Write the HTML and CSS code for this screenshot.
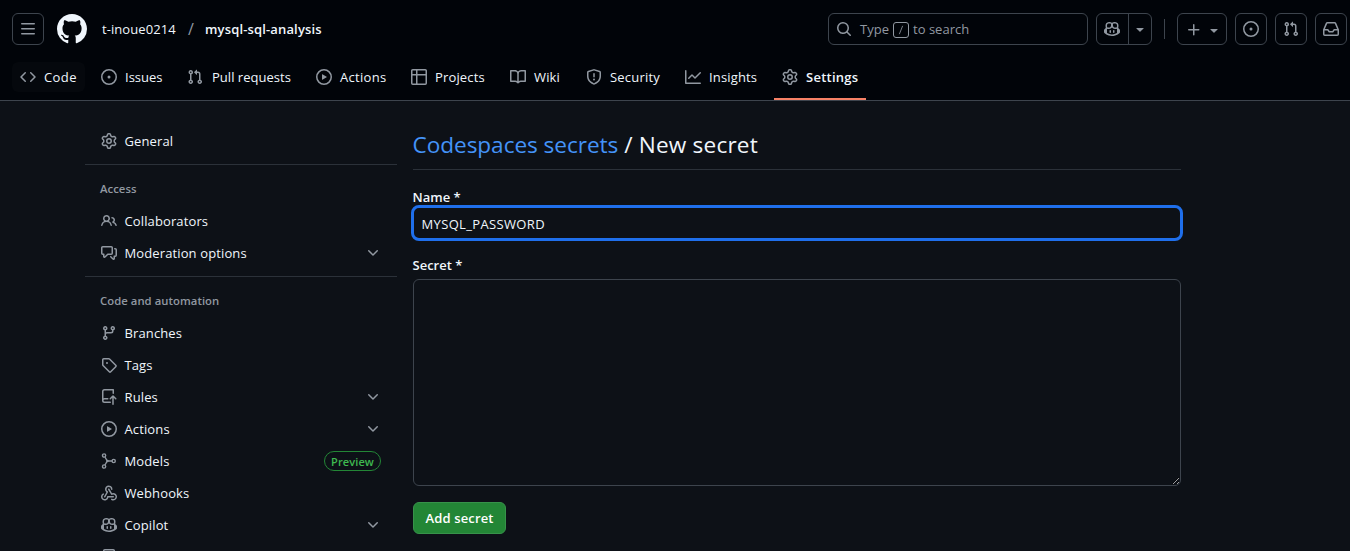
FILE: index.html
```html
<!DOCTYPE html>
<html lang="en">
<head>
<meta charset="utf-8">
<title>New secret</title>
<link rel="stylesheet" href="styles.css">
</head>
<body>
<svg class="sprite" aria-hidden="true">
  <symbol id="gear" viewBox="0 0 16 16"><path d="M8 0a8.2 8.2 0 0 1 .701.031C9.444.095 9.99.645 10.16 1.29l.288 1.107c.018.066.079.158.212.224.231.114.454.243.668.386.123.082.233.09.299.071l1.103-.303c.644-.176 1.392.021 1.82.63.27.385.506.792.704 1.218.315.675.111 1.422-.364 1.891l-.814.806c-.049.048-.098.147-.088.294.016.257.016.515 0 .772-.01.147.038.246.088.294l.814.806c.475.469.679 1.216.364 1.891a7.977 7.977 0 0 1-.704 1.217c-.428.61-1.176.807-1.82.63l-1.102-.302c-.067-.019-.177-.011-.3.071a5.909 5.909 0 0 1-.668.386c-.133.066-.194.158-.211.224l-.29 1.106c-.168.646-.715 1.196-1.458 1.26a8.006 8.006 0 0 1-1.402 0c-.743-.064-1.289-.614-1.458-1.26l-.289-1.106c-.018-.066-.079-.158-.212-.224a5.738 5.738 0 0 1-.668-.386c-.123-.082-.233-.09-.299-.071l-1.103.303c-.644.176-1.392-.021-1.82-.63a8.12 8.12 0 0 1-.704-1.218c-.315-.675-.111-1.422.363-1.891l.815-.806c.05-.048.098-.147.088-.294a6.214 6.214 0 0 1 0-.772c.01-.147-.038-.246-.088-.294l-.815-.806C.635 6.045.431 5.298.746 4.623a7.92 7.92 0 0 1 .704-1.217c.428-.61 1.176-.807 1.82-.63l1.102.302c.067.019.177.011.3-.071.214-.143.437-.272.668-.386.133-.066.194-.158.211-.224l.29-1.106C6.009.645 6.556.095 7.299.03 7.53.01 7.764 0 8 0Zm-.571 1.525c-.036.003-.108.036-.137.146l-.289 1.105c-.147.561-.549.967-.998 1.189-.173.086-.34.183-.5.29-.417.278-.97.423-1.529.27l-1.103-.303c-.109-.03-.175.016-.195.045-.22.312-.412.644-.573.99-.014.031-.021.11.059.19l.815.806c.411.406.562.957.53 1.456a4.709 4.709 0 0 0 0 .582c.032.499-.119 1.05-.53 1.456l-.815.806c-.081.08-.073.159-.059.19.162.346.353.677.573.989.02.03.085.076.195.046l1.102-.303c.56-.153 1.113-.008 1.53.27.161.107.328.204.501.29.447.222.85.629.997 1.189l.289 1.105c.029.109.101.143.137.146a6.6 6.6 0 0 0 1.142 0c.036-.003.108-.036.137-.146l.289-1.105c.147-.561.549-.967.998-1.189.173-.086.34-.183.5-.29.417-.278.97-.423 1.529-.27l1.103.303c.109.029.175-.016.195-.045.22-.313.411-.644.573-.99.014-.031.021-.11-.059-.19l-.815-.806c-.411-.406-.562-.957-.53-1.456a4.709 4.709 0 0 0 0-.582c-.032-.499.119-1.05.53-1.456l.815-.806c.081-.08.073-.159.059-.19a6.464 6.464 0 0 0-.573-.989c-.02-.03-.085-.076-.195-.046l-1.102.303c-.56.153-1.113.008-1.53-.27a4.44 4.44 0 0 0-.501-.29c-.447-.222-.85-.629-.997-1.189l-.289-1.105c-.029-.11-.101-.143-.137-.146a6.6 6.6 0 0 0-1.142 0ZM11 8a3 3 0 1 1-6 0 3 3 0 0 1 6 0ZM9.5 8a1.5 1.5 0 1 0-3.001.001A1.5 1.5 0 0 0 9.5 8Z"/></symbol>
  <symbol id="menu" viewBox="0 0 16 16"><path d="M1 2.75A.75.75 0 0 1 1.75 2h12.5a.75.75 0 0 1 0 1.5H1.75A.75.75 0 0 1 1 2.75Zm0 5A.75.75 0 0 1 1.75 7h12.5a.75.75 0 0 1 0 1.5H1.75A.75.75 0 0 1 1 7.75ZM1.75 12h12.5a.75.75 0 0 1 0 1.5H1.75a.75.75 0 0 1 0-1.5Z"/></symbol>
  <symbol id="mark" viewBox="0 0 16 16"><path d="M8 0c4.42 0 8 3.58 8 8a8.013 8.013 0 0 1-5.45 7.59c-.4.08-.55-.17-.55-.38 0-.27.01-1.13.01-2.2 0-.75-.25-1.23-.54-1.48 1.78-.2 3.65-.88 3.65-3.95 0-.88-.31-1.59-.82-2.15.08-.2.36-1.02-.08-2.12 0 0-.67-.22-2.2.82-.64-.18-1.32-.27-2-.27-.68 0-1.36.09-2 .27-1.53-1.03-2.2-.82-2.2-.82-.44 1.1-.16 1.92-.08 2.12-.51.56-.82 1.28-.82 2.15 0 3.06 1.86 3.75 3.64 3.95-.23.2-.44.55-.51 1.07-.46.21-1.61.55-2.33-.66-.15-.24-.6-.83-1.23-.82-.67.01-.27.38.01.53.34.19.73.9.82 1.13.16.45.68 1.31 2.69.94 0 .67.01 1.3.01 1.49 0 .21-.15.45-.55.38A7.995 7.995 0 0 1 0 8c0-4.42 3.58-8 8-8Z"/></symbol>
  <symbol id="code" viewBox="0 0 16 16"><path d="m11.28 3.22 4.25 4.25a.75.75 0 0 1 0 1.06l-4.25 4.25a.749.749 0 0 1-1.275-.326.749.749 0 0 1 .215-.734L13.94 8l-3.72-3.72a.749.749 0 0 1 .326-1.275.749.749 0 0 1 .734.215Zm-6.56 0a.751.751 0 0 1 1.042.018.751.751 0 0 1 .018 1.042L2.06 8l3.72 3.72a.749.749 0 0 1-.326 1.275.749.749 0 0 1-.734-.215L.47 8.53a.75.75 0 0 1 0-1.06Z"/></symbol>
  <symbol id="issue" viewBox="0 0 16 16"><path d="M8 9.5a1.5 1.5 0 1 0 0-3 1.5 1.5 0 0 0 0 3ZM8 0a8 8 0 1 1 0 16A8 8 0 0 1 8 0ZM1.5 8a6.5 6.5 0 1 0 13 0 6.5 6.5 0 0 0-13 0Z"/></symbol>
  <symbol id="pull" viewBox="0 0 16 16"><path d="M1.5 3.25a2.25 2.25 0 1 1 3 2.122v5.256a2.251 2.251 0 1 1-1.5 0V5.372A2.25 2.25 0 0 1 1.5 3.25Zm5.677-.177L9.573.677A.25.25 0 0 1 10 .854V2.5h1A2.5 2.5 0 0 1 13.5 5v5.628a2.251 2.251 0 1 1-1.5 0V5a1 1 0 0 0-1-1h-1v1.646a.25.25 0 0 1-.427.177L7.177 3.427a.25.25 0 0 1 0-.354ZM3.75 2.5a.75.75 0 1 0 0 1.5.75.75 0 0 0 0-1.5Zm0 9.5a.75.75 0 1 0 0 1.5.75.75 0 0 0 0-1.5Zm8.25.75a.75.75 0 1 0 1.5 0 .75.75 0 0 0-1.5 0Z"/></symbol>
  <symbol id="play" viewBox="0 0 16 16"><path d="M8 0a8 8 0 1 1 0 16A8 8 0 0 1 8 0ZM1.5 8a6.5 6.5 0 1 0 13 0 6.5 6.5 0 0 0-13 0Zm4.879-2.773 4.264 2.559a.25.25 0 0 1 0 .428l-4.264 2.559A.25.25 0 0 1 6 10.559V5.442a.25.25 0 0 1 .379-.215Z"/></symbol>
  <symbol id="table" viewBox="0 0 16 16"><path d="M0 1.75C0 .784.784 0 1.75 0h12.5C15.216 0 16 .784 16 1.75v12.5A1.75 1.75 0 0 1 14.25 16H1.75A1.75 1.75 0 0 1 0 14.25ZM6.5 6.5v8h7.75a.25.25 0 0 0 .25-.25V6.5Zm8-1.5V1.75a.25.25 0 0 0-.25-.25H6.5V5Zm-13 1.5v7.75c0 .138.112.25.25.25H5v-8ZM5 5V1.5H1.75a.25.25 0 0 0-.25.25V5Z"/></symbol>
  <symbol id="book" viewBox="0 0 16 16"><path d="M0 1.75A.75.75 0 0 1 .75 1h4.253c1.227 0 2.317.59 3 1.501A3.743 3.743 0 0 1 11.006 1h4.245a.75.75 0 0 1 .75.75v10.5a.75.75 0 0 1-.75.75h-4.507a2.25 2.25 0 0 0-1.591.659l-.622.621a.75.75 0 0 1-1.06 0l-.622-.621A2.25 2.25 0 0 0 5.258 13H.75a.75.75 0 0 1-.75-.75Zm7.251 10.324.004-5.073-.002-2.253A2.25 2.25 0 0 0 5.003 2.5H1.5v9h3.757a3.75 3.75 0 0 1 1.994.574ZM8.755 4.75l-.004 7.322a3.752 3.752 0 0 1 1.992-.572H14.5v-9h-3.495a2.25 2.25 0 0 0-2.25 2.25Z"/></symbol>
  <symbol id="shield" viewBox="0 0 16 16"><path d="M7.467.133a1.748 1.748 0 0 1 1.066 0l5.25 1.68A1.75 1.75 0 0 1 15 3.48V7c0 1.566-.32 3.182-1.303 4.682-.983 1.498-2.585 2.813-5.032 3.855a1.697 1.697 0 0 1-1.33 0c-2.447-1.042-4.049-2.357-5.032-3.855C1.32 10.182 1 8.566 1 7V3.48a1.75 1.75 0 0 1 1.217-1.667Zm.61 1.429a.25.25 0 0 0-.153 0l-5.25 1.68a.25.25 0 0 0-.174.238V7c0 1.358.275 2.666 1.057 3.86.784 1.194 2.121 2.34 4.366 3.297a.196.196 0 0 0 .154 0c2.245-.956 3.582-2.104 4.366-3.298C13.225 9.666 13.5 8.36 13.5 7V3.48a.251.251 0 0 0-.174-.237l-5.25-1.68ZM8.75 4.75v3a.75.75 0 0 1-1.5 0v-3a.75.75 0 0 1 1.5 0ZM9 10.5a1 1 0 1 1-2 0 1 1 0 0 1 2 0Z"/></symbol>
  <symbol id="graph" viewBox="0 0 16 16"><path d="M1.5 1.75V13.5h13.75a.75.75 0 0 1 0 1.5H.75a.75.75 0 0 1-.75-.75V1.75a.75.75 0 0 1 1.5 0Zm14.28 2.53-5.25 5.25a.75.75 0 0 1-1.06 0L7 7.06 4.28 9.78a.751.751 0 0 1-1.042-.018.751.751 0 0 1-.018-1.042l3.25-3.25a.75.75 0 0 1 1.06 0L10 7.94l4.72-4.72a.751.751 0 0 1 1.042.018.751.751 0 0 1 .018 1.042Z"/></symbol>
  <symbol id="search" viewBox="0 0 16 16"><path d="M10.68 11.74a6 6 0 0 1-7.922-8.982 6 6 0 0 1 8.982 7.922l3.04 3.04a.749.749 0 0 1-.326 1.275.749.749 0 0 1-.734-.215ZM11.5 7a4.499 4.499 0 1 0-8.997 0A4.499 4.499 0 0 0 11.5 7Z"/></symbol>
  <symbol id="copilot" viewBox="0 0 16 16"><path d="M7.998 15.035c-4.562 0-7.873-2.914-7.998-3.749V9.338c.085-.628.677-1.686 1.588-2.065.013-.07.024-.143.036-.218.029-.183.06-.384.126-.612-.201-.508-.254-1.084-.254-1.656 0-.87.128-1.769.693-2.484.579-.733 1.494-1.124 2.724-1.261 1.206-.134 2.262.034 2.944.765.05.053.096.108.139.165.044-.057.094-.112.143-.165.682-.731 1.738-.899 2.944-.765 1.23.137 2.145.528 2.724 1.261.566.715.693 1.614.693 2.484 0 .572-.053 1.148-.254 1.656.066.228.098.429.126.612.012.076.024.148.037.218.924.385 1.522 1.471 1.591 2.095v1.872c0 .766-3.351 3.795-8.002 3.795Zm0-1.485c2.28 0 4.584-1.11 5.002-1.433V7.862l-.023-.116c-.49.21-1.075.291-1.727.291-1.146 0-2.059-.327-2.71-.991A3.222 3.222 0 0 1 8 6.303a3.24 3.24 0 0 1-.544.743c-.65.664-1.563.991-2.71.991-.652 0-1.236-.081-1.727-.291l-.023.116v4.255c.419.323 2.722 1.433 5.002 1.433ZM6.762 2.83c-.193-.206-.637-.413-1.682-.297-1.019.113-1.479.404-1.713.7-.247.312-.369.789-.369 1.554 0 .793.129 1.171.308 1.371.162.181.519.379 1.442.379.853 0 1.339-.235 1.638-.54.315-.322.527-.827.617-1.553.117-.935-.037-1.395-.241-1.614Zm4.155-.297c-1.044-.116-1.488.091-1.681.297-.204.219-.359.679-.242 1.614.091.726.303 1.231.618 1.553.299.305.784.54 1.638.54.922 0 1.28-.198 1.442-.379.179-.2.308-.578.308-1.371 0-.765-.123-1.242-.37-1.554-.233-.296-.693-.587-1.713-.7ZM6.25 9.037a.75.75 0 0 1 .75.75v1.501a.75.75 0 0 1-1.5 0V9.787a.75.75 0 0 1 .75-.75Zm4.25.75v1.501a.75.75 0 0 1-1.5 0V9.787a.75.75 0 0 1 1.5 0Z"/></symbol>
  <symbol id="caret" viewBox="0 0 16 16"><path d="m4.427 7.427 3.396 3.396a.25.25 0 0 0 .354 0l3.396-3.396A.25.25 0 0 0 11.396 7H4.604a.25.25 0 0 0-.177.427Z"/></symbol>
  <symbol id="plus" viewBox="0 0 16 16"><path d="M7.75 2a.75.75 0 0 1 .75.75V7h4.25a.75.75 0 0 1 0 1.5H8.5v4.25a.75.75 0 0 1-1.5 0V8.5H2.75a.75.75 0 0 1 0-1.5H7V2.75A.75.75 0 0 1 7.75 2Z"/></symbol>
  <symbol id="inbox" viewBox="0 0 16 16"><path d="M2.8 2.06A1.75 1.75 0 0 1 4.41 1h7.18c.7 0 1.333.417 1.61 1.06l2.74 6.395c.04.093.06.194.06.295v4.5A1.75 1.75 0 0 1 14.25 15H1.75A1.75 1.75 0 0 1 0 13.25v-4.5c0-.101.02-.202.06-.295Zm1.61.44a.25.25 0 0 0-.23.152L1.887 8H4.75a.75.75 0 0 1 .6.3L6.625 10h2.75l1.275-1.7a.75.75 0 0 1 .6-.3h2.863L11.82 2.652a.25.25 0 0 0-.23-.152Zm10.09 7h-2.875l-1.275 1.7a.75.75 0 0 1-.6.3h-3.5a.75.75 0 0 1-.6-.3L4.375 9.5H1.5v3.75c0 .138.112.25.25.25h12.5a.25.25 0 0 0 .25-.25Z"/></symbol>
  <symbol id="people" viewBox="0 0 16 16"><path d="M2 5.5a3.5 3.5 0 1 1 5.898 2.549 5.508 5.508 0 0 1 3.034 4.084.75.75 0 1 1-1.482.235 4 4 0 0 0-7.9 0 .75.75 0 0 1-1.482-.236A5.507 5.507 0 0 1 3.102 8.05 3.493 3.493 0 0 1 2 5.5ZM11 4a3.001 3.001 0 0 1 2.22 5.018 5.01 5.01 0 0 1 2.56 3.012.749.749 0 0 1-.885.954.752.752 0 0 1-.549-.514 3.507 3.507 0 0 0-2.522-2.372.75.75 0 0 1-.574-.73v-.352a.75.75 0 0 1 .416-.672A1.5 1.5 0 0 0 11 5.5.75.75 0 0 1 11 4Zm-5.5-.5a2 2 0 1 0-.001 3.999A2 2 0 0 0 5.5 3.5Z"/></symbol>
  <symbol id="comments" viewBox="0 0 16 16"><path d="M1.75 1h8.5c.966 0 1.75.784 1.75 1.75v5.5A1.75 1.75 0 0 1 10.25 10H7.061l-2.574 2.573A1.458 1.458 0 0 1 2 11.543V10h-.25A1.75 1.75 0 0 1 0 8.25v-5.5C0 1.784.784 1 1.75 1ZM1.5 2.75v5.5c0 .138.112.25.25.25h1a.75.75 0 0 1 .75.75v2.19l2.72-2.72a.749.749 0 0 1 .53-.22h3.5a.25.25 0 0 0 .25-.25v-5.5a.25.25 0 0 0-.25-.25h-8.5a.25.25 0 0 0-.25.25Zm13 2a.25.25 0 0 0-.25-.25h-.5a.75.75 0 0 1 0-1.5h.5c.966 0 1.75.784 1.75 1.75v5.5A1.75 1.75 0 0 1 14.25 12H14v1.543a1.458 1.458 0 0 1-2.487 1.03L9.22 12.28a.749.749 0 0 1 .326-1.275.749.749 0 0 1 .734.215l2.22 2.22v-2.19a.75.75 0 0 1 .75-.75h1a.25.25 0 0 0 .25-.25Z"/></symbol>
  <symbol id="chevron" viewBox="0 0 16 16"><path d="M12.78 5.22a.749.749 0 0 1 0 1.06l-4.25 4.25a.749.749 0 0 1-1.06 0L3.22 6.28a.749.749 0 1 1 1.06-1.06L8 8.939l3.72-3.719a.749.749 0 0 1 1.06 0Z"/></symbol>
  <symbol id="branch" viewBox="0 0 16 16"><path d="M9.5 3.25a2.25 2.25 0 1 1 3 2.122V6A2.5 2.5 0 0 1 10 8.5H6a1 1 0 0 0-1 1v1.128a2.251 2.251 0 1 1-1.5 0V5.372a2.25 2.25 0 1 1 1.5 0v1.836A2.493 2.493 0 0 1 6 7h4a1 1 0 0 0 1-1v-.628A2.25 2.25 0 0 1 9.5 3.25Zm-6 0a.75.75 0 1 0 1.5 0 .75.75 0 0 0-1.5 0Zm8.25-.75a.75.75 0 1 0 0 1.5.75.75 0 0 0 0-1.5ZM4.25 12a.75.75 0 1 0 0 1.5.75.75 0 0 0 0-1.5Z"/></symbol>
  <symbol id="tag" viewBox="0 0 16 16"><path d="M1 7.775V2.75C1 1.784 1.784 1 2.75 1h5.025c.464 0 .91.184 1.238.513l6.25 6.25a1.75 1.75 0 0 1 0 2.474l-5.026 5.026a1.75 1.75 0 0 1-2.474 0l-6.25-6.25A1.752 1.752 0 0 1 1 7.775Zm1.5 0c0 .066.026.13.073.177l6.25 6.25a.25.25 0 0 0 .354 0l5.025-5.025a.25.25 0 0 0 0-.354l-6.25-6.25a.25.25 0 0 0-.177-.073H2.75a.25.25 0 0 0-.25.25ZM6 5a1 1 0 1 1 0 2 1 1 0 0 1 0-2Z"/></symbol>
  <symbol id="rules" viewBox="0 0 16 16"><path d="M1 2.5A2.5 2.5 0 0 1 3.5 0h8.75a.75.75 0 0 1 .75.75v3.5a.75.75 0 0 1-1.5 0V1.5h-8a1 1 0 0 0-1 1v6.708A2.493 2.493 0 0 1 3.5 9h3.25a.75.75 0 0 1 0 1.5H3.5a1 1 0 0 0 0 2h5.75a.75.75 0 0 1 0 1.5H3.5A2.5 2.5 0 0 1 1 11.5Zm13.23 7.79-1.48-1.48v6.44a.75.75 0 0 1-1.5 0V8.81L9.77 10.29a.75.75 0 0 1-1.06-1.06l2.76-2.76a.75.75 0 0 1 1.06 0l2.76 2.76a.75.75 0 1 1-1.06 1.06Z"/></symbol>
  <symbol id="models" viewBox="0 0 16 16"><g class="stroke"><circle cx="3.1" cy="2.5" r="1.6"/><circle cx="3.1" cy="13.5" r="1.6"/><circle cx="12.7" cy="8" r="1.6"/><path d="M3.9 4 6.3 8 3.9 12M6.3 8h4.8"/></g><circle cx="6.4" cy="8" r="1.3"/></symbol>
  <symbol id="webhook" viewBox="0 0 16 16"><path d="M5.5 4.25a2.25 2.25 0 0 1 4.5 0 .75.75 0 0 0 1.5 0 3.75 3.75 0 1 0-6.14 2.889l-2.272 4.258a.75.75 0 0 0 1.324.706L7 7.25a.75.75 0 0 0-.309-1.015A2.25 2.25 0 0 1 5.5 4.25Z"/><path d="M7.364 3.607a.75.75 0 0 1 1.03.257l2.608 4.349a3.75 3.75 0 1 1-.628 6.785.75.75 0 0 1 .752-1.299 2.25 2.25 0 1 0-.033-3.88.75.75 0 0 1-1.03-.256L7.107 4.636a.75.75 0 0 1 .257-1.03Z"/><path d="M2.9 8.776A.75.75 0 0 1 2.625 9.8 2.25 2.25 0 1 0 6 11.75a.75.75 0 0 1 .75-.751h5.5a.75.75 0 0 1 0 1.5H7.425a3.751 3.751 0 1 1-5.55-3.998.75.75 0 0 1 1.024.274Z"/></symbol>
  <symbol id="codespaces" viewBox="0 0 16 16"><path d="M0 11.25c0-.966.784-1.75 1.75-1.75h12.5c.966 0 1.75.784 1.75 1.75v3A1.75 1.75 0 0 1 14.25 16H1.75A1.75 1.75 0 0 1 0 14.25Zm2-9.5C2 .784 2.784 0 3.75 0h8.5C13.216 0 14 .784 14 1.75v5a1.75 1.75 0 0 1-1.75 1.75h-8.5A1.75 1.75 0 0 1 2 6.75Zm1.75-.25a.25.25 0 0 0-.25.25v5c0 .138.112.25.25.25h8.5a.25.25 0 0 0 .25-.25v-5a.25.25 0 0 0-.25-.25Z"/></symbol>
</svg>

<header class="app-header">
  <div class="topbar">
    <button class="icon-btn" aria-label="Menu"><svg class="icon"><use href="#menu"/></svg></button>
    <svg class="logo"><use href="#mark"/></svg>
    <nav class="crumbs"><span class="owner">t-inoue0214</span><span class="slash">/</span><span class="repo">mysql-sql-analysis</span></nav>
    <div class="tools">
      <div class="search"><svg class="icon"><use href="#search"/></svg><span class="hint-a">Type</span><kbd><svg class="keyslash" viewBox="0 0 6 12"><path d="M5 1 1 11"/></svg></kbd><span class="hint-b">to search</span></div>
      <div class="split"><span class="split-main"><svg class="icon"><use href="#copilot"/></svg></span><span class="split-menu"><svg class="icon"><use href="#caret"/></svg></span></div>
      <span class="bar"></span>
      <button class="icon-btn create" aria-label="Create"><svg class="icon"><use href="#plus"/></svg><svg class="icon"><use href="#caret"/></svg></button>
      <button class="icon-btn" aria-label="Issues"><svg class="icon"><use href="#issue"/></svg></button>
      <button class="icon-btn" aria-label="Pull requests"><svg class="icon"><use href="#pull"/></svg></button>
      <button class="icon-btn" aria-label="Inbox"><svg class="icon"><use href="#inbox"/></svg></button>
    </div>
  </div>
  <nav class="tabs">
    <a class="tab tab-code"><svg class="icon"><use href="#code"/></svg><span>Code</span></a>
    <a class="tab tab-issues"><svg class="icon"><use href="#issue"/></svg><span>Issues</span></a>
    <a class="tab tab-pulls"><svg class="icon"><use href="#pull"/></svg><span>Pull requests</span></a>
    <a class="tab tab-actions"><svg class="icon"><use href="#play"/></svg><span>Actions</span></a>
    <a class="tab tab-projects"><svg class="icon"><use href="#table"/></svg><span>Projects</span></a>
    <a class="tab tab-wiki"><svg class="icon"><use href="#book"/></svg><span>Wiki</span></a>
    <a class="tab tab-security"><svg class="icon"><use href="#shield"/></svg><span>Security</span></a>
    <a class="tab tab-insights"><svg class="icon"><use href="#graph"/></svg><span>Insights</span></a>
    <a class="tab tab-settings"><svg class="icon"><use href="#gear"/></svg><span>Settings</span></a>
  </nav>
</header>

<div class="page">
  <aside class="sidebar">
    <a class="row"><svg class="icon"><use href="#gear"/></svg><span>General</span></a>
    <hr>
    <h3>Access</h3>
    <a class="row"><svg class="icon"><use href="#people"/></svg><span>Collaborators</span></a>
    <a class="row"><svg class="icon"><use href="#comments"/></svg><span>Moderation options</span><svg class="icon end"><use href="#chevron"/></svg></a>
    <hr>
    <h3>Code and automation</h3>
    <a class="row"><svg class="icon"><use href="#branch"/></svg><span>Branches</span></a>
    <a class="row"><svg class="icon"><use href="#tag"/></svg><span>Tags</span></a>
    <a class="row"><svg class="icon"><use href="#rules"/></svg><span>Rules</span><svg class="icon end"><use href="#chevron"/></svg></a>
    <a class="row"><svg class="icon"><use href="#play"/></svg><span>Actions</span><svg class="icon end"><use href="#chevron"/></svg></a>
    <a class="row"><svg class="icon"><use href="#models"/></svg><span>Models</span><em class="pill end">Preview</em></a>
    <a class="row"><svg class="icon"><use href="#webhook"/></svg><span>Webhooks</span></a>
    <a class="row"><svg class="icon"><use href="#copilot"/></svg><span>Copilot</span><svg class="icon end"><use href="#chevron"/></svg></a>
    <a class="row"><svg class="icon"><use href="#codespaces"/></svg></a>
  </aside>
  <main class="content">
    <h2><a class="link">Codespaces secrets</a> <span class="current">/ New secret</span></h2>
    <label>Name *</label>
    <div class="field">MYSQL_PASSWORD</div>
    <label class="second">Secret *</label>
    <textarea class="area"></textarea>
    <button class="submit">Add secret</button>
  </main>
</div>
</body>
</html>
```
FILE: styles.css
```css
* { box-sizing: border-box; }
html, body { margin: 0; height: 551px; overflow: hidden; }
body {
  background: #0d1117;
  color: #f0f6fc;
  font: 13px/20px "Open Sans", "Noto Sans", sans-serif;
}
.sprite { position: absolute; width: 0; height: 0; }
.icon { width: 16px; height: 16px; flex: none; fill: #9198a1; display: block; }
.stroke { fill: none; stroke: #9198a1; stroke-width: 1.4; }

.app-header { height: 101px; background: #010409; border-bottom: 1px solid #3d444d; }
.topbar { display: flex; align-items: center; height: 45px; padding: 13px 3px 0 12px; }
.icon-btn {
  width: 32px; height: 32px; padding: 0; flex: none;
  display: flex; align-items: center; justify-content: center;
  background: none; border: 1px solid #3d444d; border-radius: 6px;
}
.logo { width: 30px; height: 30px; margin-left: 13px; fill: #f0f6fc; }
.crumbs { display: flex; margin-left: 15px; }
.owner { width: 76px; letter-spacing: .07px; white-space: nowrap; }
.slash { width: 6px; margin: 0 11px 0 10px; color: #9198a1; font-size: 16px; }
.repo { font-weight: 600; white-space: nowrap; letter-spacing: .15px; }
.tools { display: flex; align-items: center; margin-left: auto; gap: 8px; }
.search {
  display: flex; align-items: center; width: 260px; height: 32px; padding-left: 7px;
  border: 1px solid #3d444d; border-radius: 6px; color: #9198a1; letter-spacing: .02px;
}
.hint-a { width: 28px; margin-left: 8px; }
kbd { display: flex; align-items: center; justify-content: center; width: 16px; height: 16px; margin: 1px 4px 0 5px; border: 1px solid #9198a1; border-radius: 3px; }
.keyslash { width: 6px; height: 10px; fill: none; stroke: #9198a1; }
.split { display: flex; width: 56px; height: 32px; border: 1px solid #3d444d; border-radius: 6px; }
.split-main { width: 32px; padding: 7px; border-right: 1px solid #3d444d; }
.split-menu { padding: 7px 3px; }
.bar { width: 1px; height: 20px; margin: 0 4px; background: #3d444d; }
.create { width: 50px; gap: 4px; padding: 1px 0 0 4px; }

.tabs { display: flex; gap: 8px; padding: 17px 0 0 12px; }
.tab { position: relative; display: flex; align-items: center; gap: 8px; height: 30px; padding: 0 8px; border-radius: 6px; white-space: nowrap; letter-spacing: .15px; }
.tab-code { width: 73px; background: #05080d; letter-spacing: .4px; }
.tab-issues { width: 78px; letter-spacing: 0; }
.tab-pulls { width: 121px; letter-spacing: .02px; }
.tab-pulls span { padding-left: 1px; }
.tab-actions { width: 87px; letter-spacing: .3px; }
.tab-projects { width: 91px; }
.tab-wiki { width: 68px; }
.tab-security { width: 91px; letter-spacing: .2px; }
.tab-insights { width: 89px; }
.tab-settings { width: 92px; font-weight: 600; letter-spacing: .25px; }
.tab-settings::after { content: ""; position: absolute; left: 0; right: 0; bottom: -8px; height: 2px; background: #f78166; }

.page { display: flex; gap: 16px; padding-left: 85px; }
.sidebar { width: 312px; padding-top: 24px; }
.row { display: flex; align-items: center; gap: 7.5px; height: 32px; padding: 0 16px; letter-spacing: .12px; }
.end { margin-left: auto; }
.sidebar hr { height: 1px; margin: 7px 0; border: 0; background: #2b3139; }
.sidebar h3 { margin: 0; height: 33px; padding: 8px 15px; font-size: 11.3px; line-height: 18px; font-weight: 600; color: #9198a1; letter-spacing: .05px; }
.pill { width: 57px; height: 20px; border: 1px solid #238636; border-radius: 10px; color: #3fb950; font: 600 11px/19px "Open Sans", sans-serif; text-align: center; }

.content { width: 768px; padding-top: 28px; display: flex; flex-direction: column; }
.content h2 { margin: 0 0 17px; height: 41px; border-bottom: 1px solid #2b3139; font-size: 22.6px; line-height: 32px; font-weight: 400; text-indent: -.5px; }
.link { color: #4493f8; letter-spacing: -.05px; }
.current { letter-spacing: .2px; }
.content label { font-weight: 600; height: 20px; text-indent: -.5px; }
.field { height: 32px; outline: 3px solid #1f6feb; outline-offset: -1px; border-radius: 6px; padding: 7px 8.5px 5px; margin-bottom: 16px; letter-spacing: .35px; }
.area { height: 207px; margin: 4px 0 16px; background: #0d1117; border: 1px solid #3d444d; border-radius: 6px; resize: vertical; color-scheme: dark; }
.submit { width: 93px; height: 32px; padding: 0; border: 1px solid #37924a; border-radius: 6px; background: #238636; color: #fff; font: 600 13px/30px "Open Sans", sans-serif; letter-spacing: .15px; }
```
